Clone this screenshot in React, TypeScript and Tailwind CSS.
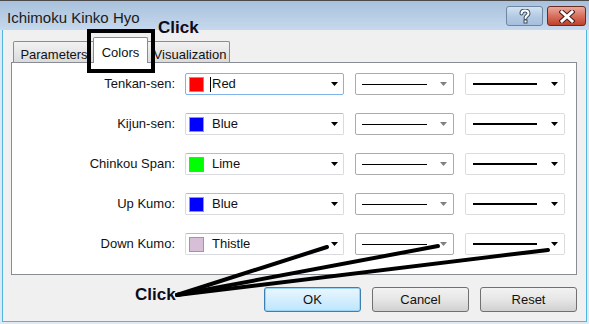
import React from 'react'

const rows = [
    {label: 'Tenkan-sen:', color: '#ff0000', name: 'Red', focus: true},
    {label: 'Kijun-sen:', color: '#0000ff', name: 'Blue'},
    {label: 'Chinkou Span:', color: '#00ff00', name: 'Lime'},
    {label: 'Up Kumo:', color: '#0000ff', name: 'Blue'},
    {label: 'Down Kumo:', color: '#d8bfd8', name: 'Thistle'},
]

const Arrow = ({gray}: { gray?: boolean }) => (
    <svg width="7" height="4" viewBox="0 0 7 4" className="shrink-0">
        <path d="M0 0H7L3.5 4Z" fill={gray ? '#808080' : '#000'}/>
    </svg>
)

const App = () => {
    return (
        <div className="relative w-[589px] h-[324px] overflow-hidden bg-[#dfe9f4] font-['Liberation_Sans',Arial,sans-serif] text-[13px] text-[#111]">
            {/* title bar */}
            <div className="flex items-start h-[30px] border-t border-[#4a4a4a] bg-gradient-to-b from-[#a9c1dc] to-[#c6d9ed]">
                <span className="ml-[7px] mt-[9px] text-[15px] leading-[15px] text-[#1a1a1a]">Ichimoku Kinko Hyo</span>
                <div className="ml-auto mt-[5px] mr-[3px] flex gap-[4px]">
                    <div className="flex items-center justify-center w-[37px] h-[20px] rounded-[3px] border border-[#6f86a3] bg-gradient-to-b from-[#d3e2f2] via-[#b5cbe4] to-[#a6bfdc]">
                        <svg width="12" height="15" viewBox="0 0 12 15">
                            <path d="M2.5 4.5C2.5 2.5 4 1.5 6 1.5S9.5 2.5 9.5 4.5C9.5 6.5 6.5 6.8 6.5 9" fill="none" stroke="#3a4a5e" strokeWidth="4" strokeLinecap="round"/>
                            <path d="M2.5 4.5C2.5 2.5 4 1.5 6 1.5S9.5 2.5 9.5 4.5C9.5 6.5 6.5 6.8 6.5 9" fill="none" stroke="#fff" strokeWidth="2" strokeLinecap="round"/>
                            <rect x="4.5" y="10.5" width="4" height="4" fill="#3a4a5e"/>
                            <rect x="5.5" y="11.5" width="2" height="2" fill="#fff"/>
                        </svg>
                    </div>
                    <div className="flex items-center justify-center w-[39px] h-[20px] rounded-[3px] border border-[#6b2a22] bg-gradient-to-b from-[#e9a89a] via-[#d7705d] to-[#c0402a]">
                        <svg width="16" height="13" viewBox="0 0 16 13">
                            <path d="M3 2L13 11M13 2L3 11" stroke="#4a1e18" strokeWidth="5" strokeLinecap="square"/>
                            <path d="M3 2L13 11M13 2L3 11" stroke="#fff" strokeWidth="3" strokeLinecap="square"/>
                        </svg>
                    </div>
                </div>
            </div>

            {/* client area */}
            <div className="absolute left-[2px] right-[2px] top-[30px] bottom-[2px] bg-[#f0f0f0] border-l border-r border-b border-[#4fb6df]">
                <div className="pl-[8px] pr-[9px]">
                    {/* tabs */}
                    <div className="flex items-end h-[32px] pl-[2px]">
                        <div className="w-[82px] h-[21px] flex justify-center pt-[3px] border border-b-0 border-[#898c95] rounded-t-[2px] bg-gradient-to-b from-[#f2f2f2] to-[#dbdbdb]">Parameters</div>
                        <div className="relative z-10 -mx-[2px] -mb-[1px] w-[55px] h-[26px] flex justify-center pt-[5px] border border-b-0 border-[#898c95] rounded-t-[2px] bg-white">Colors</div>
                        <div className="w-[84px] h-[21px] flex justify-center pt-[3px] pl-[4px] border border-b-0 border-[#898c95] rounded-t-[2px] bg-gradient-to-b from-[#f2f2f2] to-[#dbdbdb]">Visualization</div>
                    </div>
                    {/* panel */}
                    <div className="h-[213px] border border-[#898c95] bg-white pt-[10px] flex flex-col gap-[18px]">
                        {rows.map((r) => (
                            <div key={r.label} className="flex items-center h-[22px]">
                                <div className="w-[163px] text-right">{r.label}</div>
                                <div className={`ml-[10px] w-[159px] h-[22px] flex items-center pl-[3px] pr-[5px] rounded-[2px] border ${r.focus ? 'border-[#7eb4ea]' : 'border-[#d9dbe0] border-t-[#b9bcc3]'} bg-white`}>
                                    <div className="w-[15px] h-[15px] border border-[#9a9a9a]" style={{background: r.color}}/>
                                    <div className="ml-[6px] w-px h-[15px] bg-black" style={{opacity: r.focus ? 1 : 0}}/>
                                    <span className="ml-px">{r.name}</span>
                                    <div className="ml-auto"><Arrow/></div>
                                </div>
                                <div className="ml-[11px] w-[99px] h-[22px] flex items-center pl-[6px] pr-[6px] rounded-[2px] border border-[#acacac] bg-white">
                                    <div className="w-[65px] h-px bg-black"/>
                                    <div className="ml-auto"><Arrow gray/></div>
                                </div>
                                <div className="ml-[11px] w-[100px] h-[22px] flex items-center pl-[7px] pr-[6px] rounded-[2px] border border-[#dcdcdc] bg-white">
                                    <div className="w-[64px] h-[2px] bg-black"/>
                                    <div className="ml-auto"><Arrow/></div>
                                </div>
                            </div>
                        ))}
                    </div>
                    {/* buttons */}
                    <div className="flex justify-end gap-[11px] mt-[12px]">
                        <button className="w-[97px] h-[25px] rounded-[3px] border border-[#3c7fb1] bg-gradient-to-b from-[#eaf6fd] to-[#bee6fd] shadow-[inset_0_0_0_1px_#9ad3f5]">OK</button>
                        <button className="w-[97px] h-[25px] rounded-[3px] border border-[#707070] bg-gradient-to-b from-[#f2f2f2] via-[#e6e6e6] to-[#d0d0d0]">Cancel</button>
                        <button className="w-[97px] h-[25px] rounded-[3px] border border-[#707070] bg-gradient-to-b from-[#f2f2f2] via-[#e6e6e6] to-[#d0d0d0]">Reset</button>
                    </div>
                </div>
            </div>

            {/* annotations */}
            <div className="absolute left-[87px] top-[29px] w-[68px] h-[44px] border-[4px] border-black z-20"/>
            <span className="absolute left-[158px] top-[18px] z-20 font-bold text-[17px] leading-[20px] text-[#0d0d1a]">Click</span>
            <span className="absolute left-[135px] top-[285px] z-20 font-bold text-[17px] leading-[20px] text-[#0d0d1a]">Click</span>
            <svg className="absolute inset-0 z-20 pointer-events-none" width="589" height="324">
                <g stroke="#000" strokeWidth="4" strokeLinecap="round">
                    <line x1="177" y1="295" x2="327" y2="247"/>
                    <line x1="177" y1="295" x2="438" y2="246"/>
                    <line x1="177" y1="295" x2="548" y2="250"/>
                </g>
            </svg>
        </div>
    )
}

export default App
